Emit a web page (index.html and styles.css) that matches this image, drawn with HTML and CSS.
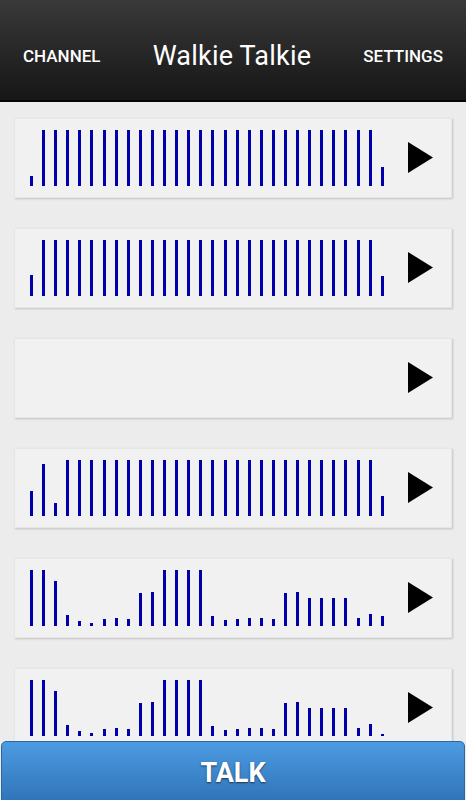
FILE: index.html
```html
<!DOCTYPE html>
<html lang="en">

<head>
	<meta charset="utf-8">
	<meta name="viewport" content="width=device-width, initial-scale=1.0">

	<title>Walkie Talkie</title>

	<link rel="stylesheet" href="styles.css">
</head>

<body>
	<header class="action-bar">
		<span class="action">CHANNEL</span>
		<h1 class="title">Walkie Talkie</h1>
		<span class="action">SETTINGS</span>
	</header>

	<main id="messages" class="messages"></main>

	<footer class="footer">
		<button class="talk">TALK</button>
	</footer>

	<script type="text/javascript">
		const full = 56;
		const rep = (h, n) => Array(n).fill(h);

		const clips = [
			[10, ...rep(full, 28), 19],
			[21, ...rep(full, 28), 20],
			[],
			[25, 52, 13, ...rep(full, 26), 20],
			[56, 56, 45, 11, 5, 3, 7, 8, 7, 33, 34, 56, 56, 56, 56, 10, 6, 7, 8, 8, 7, 33, 34, 28, 28, 28, 28, 8, 12, 10],
			[56, 56, 45, 11, 5, 3, 7, 8, 7, 33, 34, 56, 56, 56, 56, 10, 6, 7, 8, 8, 7, 33, 34, 28, 28, 28, 28, 8, 12, 2]
		];

		const list = document.querySelector('#messages');
		for (const levels of clips) {
			const card = document.createElement('div');
			card.className = 'clip';

			const wave = document.createElement('div');
			wave.className = 'wave';
			for (const h of levels) {
				const bar = document.createElement('span');
				bar.className = 'bar';
				bar.style.height = h + 'px';
				wave.appendChild(bar);
			}
			card.appendChild(wave);

			const play = document.createElement('div');
			play.className = 'play';
			play.innerHTML = '<svg width="25" height="31" viewBox="0 0 25 31"><path d="M0 0 L25 15.5 L0 31 Z" fill="#000"/></svg>';
			card.appendChild(play);

			list.appendChild(card);
		}
	</script>
</body>

</html>
```

FILE: styles.css
```css
html, body {
	height: 100%;
}

body {
	background-color: #ececec;
	font-family: Roboto, 'Noto Sans', sans-serif;
	margin: 0;
	height: 800px;
	overflow: hidden;
	display: flex;
	flex-direction: column;
}

.action-bar {
	flex: none;
	box-sizing: content-box;
	height: 89px;
	padding: 11px 23px 0;
	border-bottom: 2px solid #050505;
	background: linear-gradient(#393939, #161616);
	display: flex;
	align-items: center;
	justify-content: space-between;
	color: #fff;
}
.action-bar .action {
	font-size: 17px;
	font-weight: 500;
}
.action-bar .title {
	margin: 0;
	font-size: 27px;
	font-weight: 400;
	letter-spacing: .2px;
}

.messages {
	flex: 1;
	overflow: hidden;
	padding: 16px 14px 0;
	display: flex;
	flex-direction: column;
	gap: 30px;
}

.clip {
	flex: none;
	height: 80px;
	box-sizing: border-box;
	background-color: #f1f1f1;
	border: 1px solid #e6e6e6;
	box-shadow: 1px 1px 2px rgba(0, 0, 0, .18);
	display: flex;
	align-items: center;
}

.wave {
	width: 354px;
	height: 56px;
	margin: 0 0 11px 15px;
	align-self: flex-end;
	display: flex;
	align-items: flex-end;
	justify-content: space-between;
}
.bar {
	width: 3px;
	background-color: #0000aa;
}

.play {
	margin-left: auto;
	margin-right: 18px;
	height: 31px;
	margin-top: -2px;
}

.footer {
	flex: none;
	height: 59px;
	overflow: hidden;
	padding: 0 1px;
}
.talk {
	width: 100%;
	height: 64px;
	border: 1px solid #2c67a5;
	border-radius: 5px;
	background: linear-gradient(#4c9be2, #2f72b6);
	color: #fff;
	font-family: Roboto, 'Noto Sans', sans-serif;
	font-size: 27px;
	font-weight: 700;
	text-shadow: 0 1px 2px rgba(0, 0, 0, .6);
	padding: 0;
}
```
